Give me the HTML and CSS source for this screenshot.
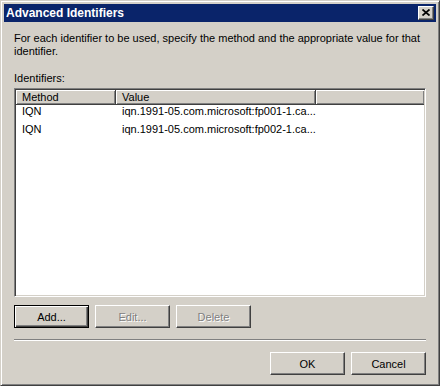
FILE: index.html
```html
<!DOCTYPE html>
<html lang="en">
<head>
  <meta charset="UTF-8">
  <title>Advanced Identifiers</title>
  <link rel="stylesheet" href="styles.css">
</head>
<body>
  <div class="window">
    <div class="titlebar">
      <span class="title">Advanced Identifiers</span>
      <button class="close-btn" aria-label="Close">
        <svg width="8" height="7" viewBox="0 0 8 7">
          <path d="M0.5 0.5 L7.5 6.5 M7.5 0.5 L0.5 6.5" stroke="#000" stroke-width="1.7" fill="none"/>
        </svg>
      </button>
    </div>

    <div class="dialog-body">
      <p class="intro">For each identifier to be used, specify the method and the appropriate value for that<br>identifier.</p>

      <div class="field-label">Identifiers:</div>
      <div class="listview">
        <div class="lv-header">
          <div class="lv-col col-method">Method</div>
          <div class="lv-col col-value">Value</div>
          <div class="lv-col col-fill"></div>
        </div>
        <div class="lv-row">
          <div class="cell col-method">IQN</div>
          <div class="cell col-value">iqn.1991-05.com.microsoft:fp001-1.ca...</div>
        </div>
        <div class="lv-row">
          <div class="cell col-method">IQN</div>
          <div class="cell col-value">iqn.1991-05.com.microsoft:fp002-1.ca...</div>
        </div>
      </div>

      <div class="button-row">
        <button class="btn btn-default">Add...</button>
        <button class="btn" disabled>Edit...</button>
        <button class="btn" disabled>Delete</button>
      </div>

      <div class="separator"></div>

      <div class="button-row dialog-actions">
        <button class="btn">OK</button>
        <button class="btn">Cancel</button>
      </div>
    </div>
  </div>
</body>
</html>
```

FILE: styles.css
```css
:root {
  --face: #d4d0c8;
  --shadow: #808080;
  --dark-shadow: #404040;
  --highlight: #ffffff;
  --title-bg: #0a246a;
}

* {
  box-sizing: border-box;
  margin: 0;
  padding: 0;
}

body {
  font-family: 'Liberation Sans', Arial, sans-serif;
  font-size: 11px;
  line-height: 13px;
  color: #000;
  background-color: var(--face);
}

.window {
  width: 440px;
  height: 386px;
  background-color: var(--face);
  border: 1px solid;
  border-color: var(--face) var(--dark-shadow) var(--dark-shadow) var(--face);
  box-shadow: inset 1px 1px var(--highlight), inset -1px -1px var(--shadow);
  padding: 3px;
  display: flex;
  flex-direction: column;
}

.titlebar {
  height: 18px;
  background-color: var(--title-bg);
  display: flex;
  align-items: center;
  justify-content: space-between;
  padding: 0 2px 0 2px;
}

.title {
  color: #fff;
  font-weight: bold;
  font-size: 12px;
}

.close-btn {
  width: 16px;
  height: 14px;
  background-color: var(--face);
  border: 1px solid;
  border-color: var(--highlight) var(--dark-shadow) var(--dark-shadow) var(--highlight);
  box-shadow: inset -1px -1px var(--shadow);
  display: flex;
  align-items: center;
  justify-content: center;
  padding: 0 0 1px 0;
}

.close-btn svg {
  display: block;
}

.dialog-body {
  padding: 10px 10px 0 10px;
  display: flex;
  flex-direction: column;
}

.intro {
  margin-bottom: 14px;
}

.field-label {
  margin-bottom: 3px;
}

.listview {
  height: 209px;
  background-color: #fff;
  border: 1px solid;
  border-color: var(--shadow) var(--highlight) var(--highlight) var(--shadow);
  box-shadow: inset 1px 1px var(--dark-shadow), inset -1px -1px var(--face);
  padding: 1px;
}

.lv-header {
  display: flex;
  height: 15px;
}

.lv-col {
  height: 15px;
  background-color: var(--face);
  border-right: 1px solid var(--dark-shadow);
  border-bottom: 1px solid var(--dark-shadow);
  box-shadow: inset 1px 1px var(--highlight), inset -1px -1px var(--shadow);
  padding: 1px 6px 0 6px;
  line-height: 12px;
  white-space: nowrap;
}

.col-method {
  width: 100px;
  flex-shrink: 0;
}

.col-value {
  width: 200px;
  flex-shrink: 0;
}

.col-fill {
  flex: 1;
  border-right: none;
}

.lv-row {
  display: flex;
  height: 18px;
}

.cell {
  padding: 0 6px;
  white-space: nowrap;
  overflow: hidden;
}

.button-row {
  display: flex;
  gap: 6px;
  margin-top: 8px;
}

.btn {
  width: 75px;
  height: 23px;
  font-family: inherit;
  font-size: 11px;
  color: #000;
  background-color: var(--face);
  border: 1px solid;
  border-color: var(--highlight) var(--dark-shadow) var(--dark-shadow) var(--highlight);
  box-shadow: inset -1px -1px var(--shadow);
  padding: 0;
}

.btn-default {
  border: 1px solid #000;
  box-shadow: inset 1px 1px var(--highlight), inset -1px -1px var(--dark-shadow), inset -2px -2px var(--shadow);
}

.btn:disabled {
  color: var(--shadow);
  text-shadow: 1px 1px var(--highlight);
}

.separator {
  height: 2px;
  margin-top: 11px;
  border-top: 1px solid var(--shadow);
  border-bottom: 1px solid var(--highlight);
}

.dialog-actions {
  justify-content: flex-end;
  margin-top: 11px;
}
```
